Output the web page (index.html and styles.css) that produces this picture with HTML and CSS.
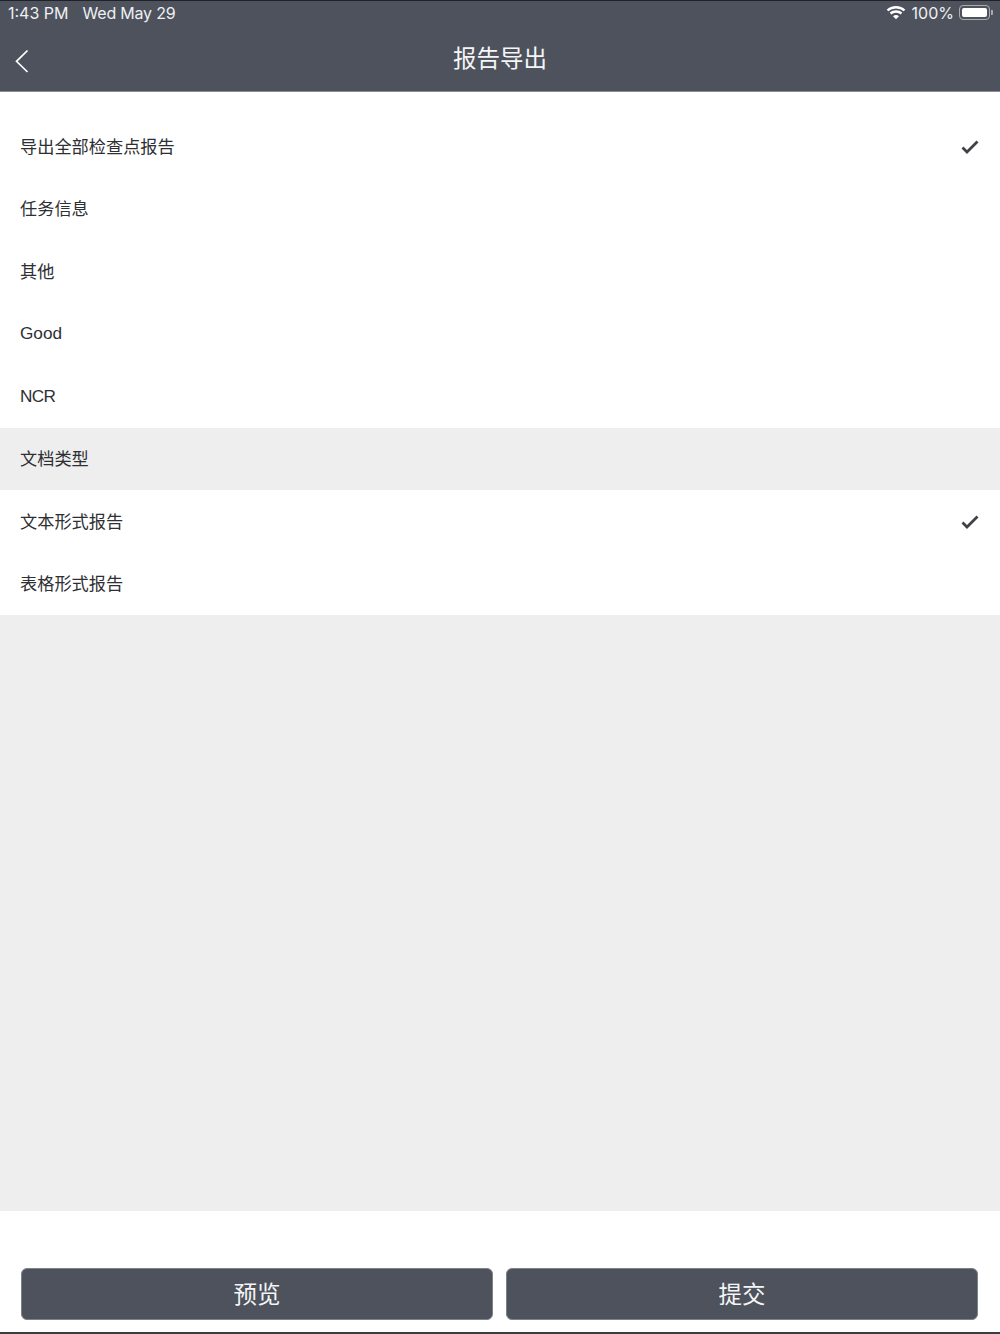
FILE: index.html
```html
<!DOCTYPE html>
<html lang="zh">
<head>
<meta charset="utf-8">
<title>报告导出</title>
<link rel="stylesheet" href="styles.css">
</head>
<body>
<div class="page">
  <header class="header">
    <div class="status">
      <span class="status-time">1:43 PM</span>
      <span class="status-date">Wed May 29</span>
      <span class="status-right">
        <svg class="wifi" width="20" height="15" viewBox="0 0 20 15"><path d="M1.500 5.500C6 1.200 14 1.200 18.500 5.500" fill="none" stroke="#fff" stroke-width="2.400"/><path d="M4.500 8.500C7.500 5.900 12.500 5.900 15.500 8.500" fill="none" stroke="#fff" stroke-width="2.400"/><path d="M7 11.200C8.800 9.700 11.200 9.700 13 11.200L10 14.300Z" fill="#fff"/></svg>
        <span class="battery-pct">100%</span>
        <span class="battery"><span class="battery-fill"></span></span>
        <span class="battery-tip"></span>
      </span>
    </div>
    <div class="nav">
      <svg class="back" width="14" height="24" viewBox="0 0 14 24"><path d="M12.500 1.500 1.500 12.300 12.500 23" fill="none" stroke="#fff" stroke-width="1.700"/></svg>
      <h1 class="title">报告导出</h1>
    </div>
  </header>
  <main class="content">
    <div class="group">
      <div class="row row-cjk"><span>导出全部检查点报告</span><svg class="check" width="18" height="14" viewBox="0 0 18 14"><path d="M1.500 7.500 6 12 16.500 1.500" fill="none" stroke="#3f4145" stroke-width="2.800"/></svg></div>
      <div class="row row-cjk"><span>任务信息</span></div>
      <div class="row row-cjk"><span>其他</span></div>
      <div class="row"><span>Good</span></div>
      <div class="row row-latin"><span>NCR</span></div>
      <div class="row row-cjk row-section"><span>文档类型</span></div>
      <div class="row row-cjk"><span>文本形式报告</span><svg class="check" width="18" height="14" viewBox="0 0 18 14"><path d="M1.500 7.500 6 12 16.500 1.500" fill="none" stroke="#3f4145" stroke-width="2.800"/></svg></div>
      <div class="row row-cjk"><span>表格形式报告</span></div>
    </div>
    <div class="filler"></div>
  </main>
  <footer class="footer">
    <button class="btn">预览</button>
    <button class="btn">提交</button>
  </footer>
</div>
</body>
</html>
```
FILE: styles.css
```css
* { box-sizing: border-box; }
html, body { margin: 0; padding: 0; }
body {
  background: #fff;
  font-family: "Liberation Sans", "Noto Sans CJK SC", sans-serif;
  color: #2e2f33;
}
.page {
  width: 1000px;
  height: 1334px;
  display: flex;
  flex-direction: column;
  border-bottom: 2px solid #3c3d40;
}
.header {
  height: 92px;
  background: #4d525d;
  border-top: 1px solid #202228;
  border-bottom: 1px solid #8b8e95;
  color: #fff;
  flex: none;
}
.status {
  height: 25px;
  display: flex;
  align-items: center;
  padding: 0 7px 2px 8px;
  font-family: "Inter", "Liberation Sans", sans-serif;
  font-size: 16px;
  color: #eef0f2;
}
.status-date { margin-left: 14px; letter-spacing: -0.2px; }
.status-right { margin-left: auto; display: flex; align-items: center; }
.wifi { margin-right: 6px; }
.battery {
  width: 31px;
  height: 15px;
  margin-left: 5px;
  padding: 2px;
  border: 1px solid #a9acb2;
  border-radius: 4px;
  display: flex;
}
.battery-fill { flex: 1; background: #fff; border-radius: 2px; }
.battery-tip { width: 2px; height: 5px; margin-left: 1px; background: #a9acb2; border-radius: 0 1px 1px 0; }
.nav {
  height: 65px;
  display: flex;
  align-items: center;
  justify-content: center;
  position: relative;
  padding-top: 2px;
}
.back { position: absolute; left: 15px; top: 23px; }
.title { margin: 0; font-size: 23.500px; font-weight: 400; color: #f4f5f6; line-height: 1; }
.content { flex: 1; display: flex; flex-direction: column; min-height: 0; }
.group { padding-top: 23px; flex: none; }
.row {
  height: 62.500px;
  padding: 0 21px 0 20px;
  display: flex;
  align-items: center;
  justify-content: space-between;
  font-size: 17.200px;
}
.row-cjk span { margin-bottom: 2px; }
.row-latin span { margin-top: 1px; letter-spacing: -0.600px; }
.row-section { background: #eeeeee; }
.check { margin-top: 1px; }
.filler { flex: 1; background: #eeeeee; }
.footer {
  height: 121px;
  flex: none;
  display: flex;
  align-items: flex-start;
  gap: 13px;
  padding: 57px 22px 0 21px;
}
.btn {
  flex: 1;
  height: 52px;
  padding: 0 0 2px;
  border: 1px solid #7d818a;
  border-radius: 6px;
  background: #4d525d;
  color: #f4f5f6;
  font-family: inherit;
  font-size: 23.500px;
}
```
